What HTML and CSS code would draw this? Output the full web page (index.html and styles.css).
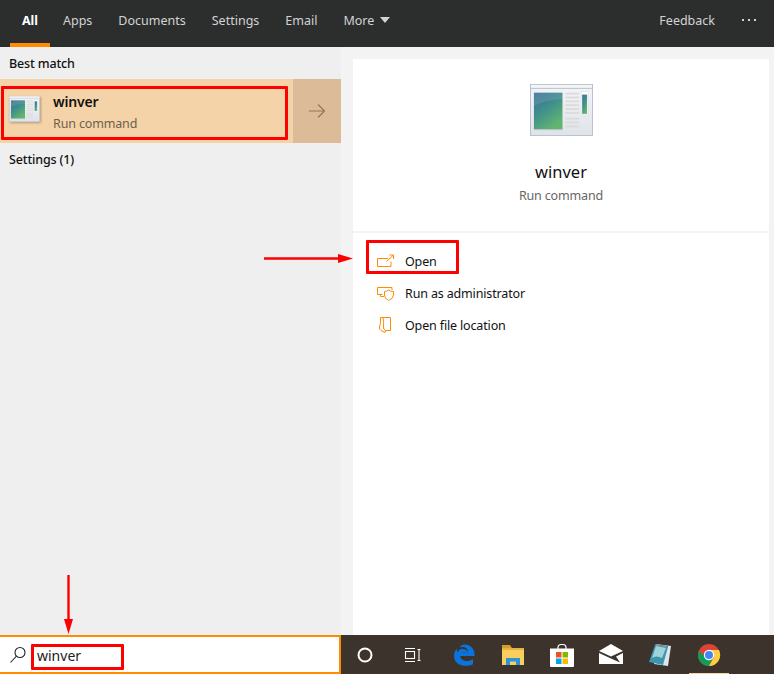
FILE: index.html
```html
<!DOCTYPE html>
<html lang="en">
<head>
<meta charset="utf-8">
<title>Search winver</title>
<link rel="stylesheet" href="styles.css">
</head>
<body>
<svg class="defs" width="0" height="0" aria-hidden="true">
  <defs>
    <linearGradient id="pane" x1="0" y1="0" x2="0.6" y2="1">
      <stop offset="0" stop-color="#3f6f9c"/><stop offset="0.5" stop-color="#3f8f8c"/><stop offset="1" stop-color="#62b56f"/>
    </linearGradient>
    <linearGradient id="body" x1="0" y1="0" x2="0" y2="1">
      <stop offset="0" stop-color="#f4f5f7"/><stop offset="1" stop-color="#dfe3e8"/>
    </linearGradient>
    <symbol id="app" viewBox="0 0 64 54" preserveAspectRatio="none">
      <rect x="0.500" y="0.500" width="63" height="53" fill="url(#body)" stroke="#b7c2d2"/>
      <rect x="1" y="1" width="62" height="3" fill="#f6f6f6"/>
      <rect x="1" y="4" width="62" height="1" fill="#b9bfc6"/>
      <rect x="4" y="9" width="29" height="38" fill="url(#pane)"/>
      <rect x="4" y="47" width="29" height="1" fill="#b8c0c4"/>
      <path d="M4 23Q18 15 33 16V9H4Z" fill="#fff" opacity=".1"/>
      <g fill="#dcdcdc">
        <rect x="36" y="9" width="14" height="2"/><rect x="36" y="13" width="14" height="2"/>
        <rect x="36" y="17" width="14" height="2"/><rect x="36" y="21" width="14" height="2"/>
        <rect x="36" y="25" width="14" height="2"/><rect x="36" y="29" width="14" height="2"/>
        <rect x="36" y="35" width="14" height="2"/><rect x="36" y="39" width="14" height="2"/>
        <rect x="36" y="43" width="14" height="2"/>
      </g>
      <rect x="52" y="8" width="7" height="24" fill="#fff" stroke="#d5dbe0" stroke-width=".5"/>
      <rect x="53" y="11" width="5" height="20" fill="url(#pane)"/>
    </symbol>
  </defs>
</svg>

<header class="topbar">
  <nav class="tabs">
    <a class="tab active">All</a>
    <a class="tab">Apps</a>
    <a class="tab">Documents</a>
    <a class="tab">Settings</a>
    <a class="tab">Email</a>
    <a class="tab">More <span class="caret"></span></a>
  </nav>
  <div class="top-actions">
    <a class="tab">Feedback</a>
    <span class="dots"><i></i><i></i><i></i></span>
  </div>
</header>

<main class="content">
  <section class="results">
    <h2 class="group first">Best match</h2>
    <div class="match">
      <div class="match-main">
        <svg class="match-icon"><use href="#app"/></svg>
        <div class="match-text">
          <div class="match-name">winver</div>
          <div class="match-type">Run command</div>
        </div>
      </div>
      <div class="match-arrow">
        <svg width="16" height="16" viewBox="0 0 16 16" fill="none" stroke="#8a7560" stroke-width="1.100"><path d="M0 8H15.500M9 1.500L15.500 8L9 14.500"/></svg>
      </div>
    </div>
    <h2 class="group">Settings (1)</h2>
  </section>

  <section class="detail">
    <div class="card">
      <div class="hero">
        <svg class="hero-icon"><use href="#app"/></svg>
        <div class="hero-name">winver</div>
        <div class="hero-type">Run command</div>
      </div>
      <ul class="actions">
        <li class="action">
          <svg width="18" height="18" viewBox="0 0 18 18" fill="none" stroke="#ff8c00" stroke-width="1"><path d="M11 6.500H.5V14.500H14V9.500M9.500 9.500L16 3.500M12.500 3H16.500V7"/></svg>
          <span>Open</span>
        </li>
        <li class="action">
          <svg width="18" height="18" viewBox="0 0 18 18" fill="none" stroke="#ff8c00" stroke-width="1"><path d="M5.500 10.500H3.500V12.500H7M.5 3.500V10.500H3.500M.5 3.500H15V6M7.500 7.500Q10 7.500 11.500 6Q13 7.500 16.500 7.500V11Q16.500 14.500 11.500 16.500Q7.500 14.500 7.500 11Z"/></svg>
          <span>Run as administrator</span>
        </li>
        <li class="action">
          <svg width="18" height="18" viewBox="0 0 18 18" fill="none" stroke="#ff8c00" stroke-width="1"><path d="M3.500 1.500H13.500V14.500H8.500L8 16.500L4 14.500Q2 13.500 2.500 11Q4 7 3.500 1.500ZM8.500 14.500Q6 13.500 6.500 11Q7 7 6 1.500"/></svg>
          <span>Open file location</span>
        </li>
      </ul>
    </div>
  </section>
</main>

<footer class="bottom">
  <div class="search">
    <svg width="18" height="18" viewBox="0 0 18 18" fill="none" stroke="#222" stroke-width="1.100"><circle cx="11" cy="6.500" r="5"/><path d="M7.500 10L1.500 16.500"/></svg>
    <span class="query">winver</span>
  </div>
  <div class="taskbar">
    <svg class="t-cortana" width="16" height="16" viewBox="0 0 16 16" fill="none" stroke="#fff" stroke-width="2"><circle cx="8" cy="8" r="6.500"/></svg>
    <svg class="t-view" width="18" height="16" viewBox="0 0 18 16" fill="none" stroke="#fff" stroke-width="1.100"><rect x="1.500" y="4.500" width="9" height="7"/><path d="M1 1.500H11M1 14.500H11M13.500 2.500H16.500M15 2.500V13.500M13.500 13.500H16.500"/></svg>
    <svg class="t-app" width="24" height="24" viewBox="0 0 24 24"><path fill="#0a74da" d="M12.500 1.500C19 1.500 23 6.500 22.500 13H8.200C8.800 18.200 15.500 19.500 21 16.200V21.300C14 24.500 2 22.800 2 13C2 10 3 7.500 5 5.500C4.500 7.500 4.800 8.500 6 9C7 6.500 9 6 10 6C14 6 16 7.500 16 9.500H8.600C10.500 10 13.500 9.800 16 9.500C16.500 5 12 3 7.500 4.500C8.800 2.500 10.500 1.500 12.500 1.500Z"/></svg>
    <svg class="t-app" width="24" height="24" viewBox="0 0 24 24"><path fill="#d79d22" d="M1 2H9L11 5H1Z"/><rect x="1" y="5" width="22" height="17" fill="#f8ce5e"/><rect x="1" y="5" width="22" height="2" fill="#e5b440"/><path fill="#2e93d8" d="M5 22V15H19V22H15V18.500H9V22Z"/></svg>
    <svg class="t-app" width="24" height="24" viewBox="0 0 24 24"><path fill="none" stroke="#fff" stroke-width="1.200" d="M8 6V4A3 3 0 0 1 11 1.500H13A3 3 0 0 1 16 4V6"/><path fill="#fff" d="M0 5.500H24V23Q24 24 23 24H1Q0 24 0 23Z"/><rect x="6" y="9" width="5.500" height="5.500" fill="#f25022"/><rect x="12.500" y="9" width="5.500" height="5.500" fill="#7fba00"/><rect x="6" y="15.500" width="5.500" height="5.500" fill="#00a4ef"/><rect x="12.500" y="15.500" width="5.500" height="5.500" fill="#ffb900"/></svg>
    <svg class="t-app" width="24" height="24" viewBox="0 0 24 24"><path fill="#fff" d="M0 8L12 1L24 8L12 13.500Z"/><path fill="#fff" d="M0 10V21H24V10L17 13.500L21 19.500L12 15.500Z"/></svg>
    <svg class="t-app" width="24" height="24" viewBox="0 0 24 24"><path fill="#dfe7ea" d="M8 1L23 3L20 23L6 21Z"/><path fill="#3f95ad" d="M7 2L20 4L15 22L1 19Z"/><path fill="#9fd3dc" d="M8 3L18 5L14 15Q8 12 4 15Z"/><path fill="#6b7a80" d="M7 1L20 3L20 4L7 2Z"/></svg>
    <svg class="t-app" width="24" height="24" viewBox="0 0 24 24"><circle cx="12" cy="12" r="11" fill="#db4437"/><path fill="#0f9d58" d="M1.500 8.500A11 11 0 0 0 12 23L17 13H8Z"/><path fill="#ffcd40" d="M12 7H22A11 11 0 0 1 12 23L17 14Z"/><circle cx="12" cy="12" r="5.200" fill="#fff"/><circle cx="12" cy="12" r="4" fill="#4285f4"/></svg>
    <span class="running"></span>
  </div>
</footer>

<div class="mark mark-match"></div>
<div class="mark mark-open"></div>
<div class="mark mark-query"></div>
<svg class="arrow arrow-right" width="92" height="12" viewBox="0 0 92 12"><path fill="#f00" d="M0 5.300H74V2L89 6.500L74 11V7.700H0Z"/></svg>
<svg class="arrow arrow-down" width="12" height="60" viewBox="0 0 12 60"><path fill="#f00" d="M4.300 0H6.700V44H10L5.500 59L1 44H4.300Z"/></svg>
</body>
</html>
```
FILE: styles.css
```css
* { box-sizing: border-box; }
html, body { margin: 0; padding: 0; }
body {
  width: 774px;
  height: 674px;
  overflow: hidden;
  position: relative;
  display: flex;
  flex-direction: column;
  font-family: "Noto Sans", "Open Sans", sans-serif;
  font-size: 12.5px;
  letter-spacing: -0.15px;
  color: #111;
  background: #f3f3f3;
}
.defs { position: absolute; }

.topbar {
  height: 47px;
  flex: none;
  display: flex;
  justify-content: space-between;
  background: #2c2e2e;
  color: #d3d3d3;
}
.tabs { display: flex; padding-left: 10px; }
.tab {
  height: 47px;
  line-height: 41px;
  padding: 0 13px;
  font-size: 12.5px;
  letter-spacing: 0;
  white-space: nowrap;
}
.tab.active {
  width: 40px;
  padding: 0;
  text-align: center;
  color: #fff;
  font-weight: 700;
  border-bottom: 4px solid #ff8c00;
}
.caret {
  display: inline-block;
  width: 0;
  height: 0;
  margin-left: 2px;
  vertical-align: 2px;
  border-left: 5px solid transparent;
  border-right: 5px solid transparent;
  border-top: 6px solid #d3d3d3;
}
.top-actions { display: flex; padding-right: 18px; }
.top-actions .tab { padding: 0; margin-right: 27px; }
.dots { display: flex; gap: 4px; padding-top: 19px; }
.dots i { width: 2px; height: 2px; background: #d3d3d3; }

.content { flex: 1; display: flex; min-height: 0; }
.results { width: 341px; flex: none; background: #efefef; }
.group {
  margin: 0;
  padding-left: 9px;
  font-size: 12.5px;
  font-weight: 500;
  line-height: 18px;
  color: #111;
}
.group.first { padding-top: 8px; padding-bottom: 6px; }
.group:not(.first) { padding-top: 8px; }
.match { height: 64px; display: flex; background: #f5d3a8; }
.match-main { width: 292px; display: flex; align-items: flex-start; padding: 12px 0 0 9px; }
.match-icon {
  width: 31px;
  height: 26px;
  margin-top: 5px;
  flex: none;
  filter: drop-shadow(1px 1px 1px rgba(110, 90, 60, 0.5));
}
.match-text { margin-left: 13px; }
.match-name { font-size: 14px; font-weight: 600; line-height: 22px; }
.match-type { margin-top: 1px; line-height: 19px; color: #6f5f4c; }
.match-arrow {
  width: 48px;
  margin-left: 1px;
  display: flex;
  align-items: center;
  justify-content: center;
  background: #dcbc98;
}

.detail { flex: 1; padding: 12px 5px 0 12px; }
.card { height: 100%; background: #fff; }
.hero {
  height: 174px;
  padding-top: 25px;
  display: flex;
  flex-direction: column;
  align-items: center;
  border-bottom: 2px solid #f3f3f3;
}
.hero-icon { width: 63px; height: 52px; flex: none; }
.hero-name { margin-top: 24px; font-size: 16.5px; line-height: 24px; letter-spacing: 0; }
.hero-type { margin-top: 2px; line-height: 20px; color: #666; }
.actions { list-style: none; margin: 12px 0 0; padding: 0 0 0 24px; }
.action { height: 32px; display: flex; align-items: center; gap: 10px; }
.action svg { flex: none; }

.bottom { height: 39px; flex: none; display: flex; }
.search {
  width: 341px;
  flex: none;
  display: flex;
  align-items: center;
  padding: 0 0 0 9px;
  background: #fff;
  border: 2px solid #ff8c00;
  border-left: 0;
}
.query { margin: 2px 0 0 10px; font-size: 14px; line-height: 18px; letter-spacing: 0; color: #222; }
.taskbar {
  flex: 1;
  position: relative;
  display: flex;
  align-items: center;
  padding-left: 16px;
  background: #3c342c;
}
.t-cortana { margin-right: 31px; }
.t-view { margin-right: 30px; }
.t-app { margin-right: 25px; flex: none; }
.running {
  position: absolute;
  left: 348px;
  bottom: 0;
  width: 40px;
  height: 1px;
  background: #f5d3a8;
}

.mark { position: absolute; border: 3px solid #f00; border-radius: 1px; }
.mark-match { left: 1px; top: 86px; width: 287px; height: 54px; }
.mark-open { left: 366px; top: 240px; width: 93px; height: 34px; }
.mark-query { left: 31px; top: 644px; width: 93px; height: 26px; }
.arrow { position: absolute; }
.arrow-right { left: 264px; top: 252px; }
.arrow-down { left: 63px; top: 575px; }
```
